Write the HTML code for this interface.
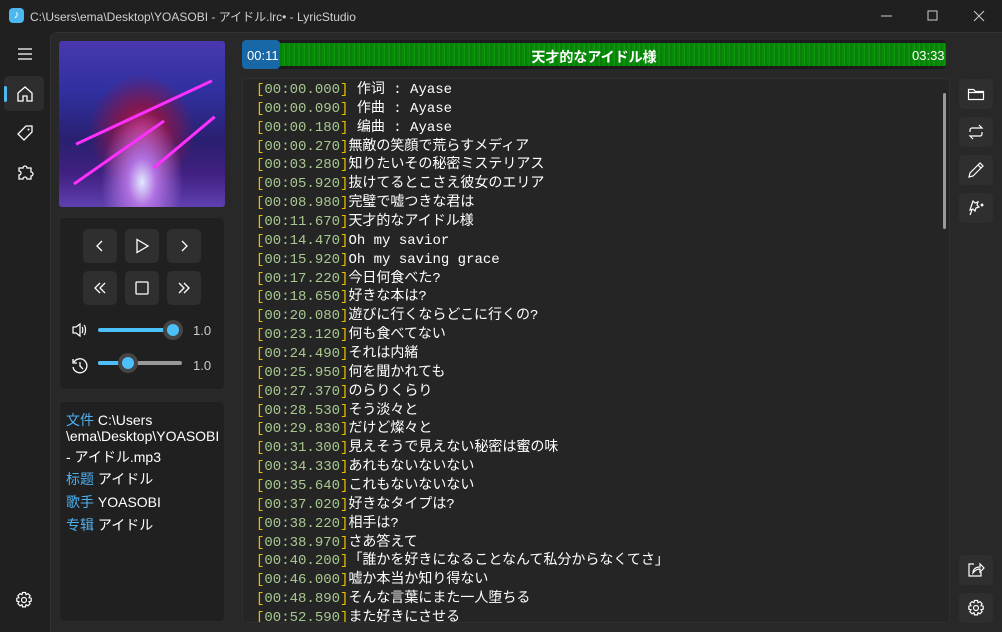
<!DOCTYPE html>
<html><head><meta charset="utf-8"><style>
*{margin:0;padding:0;box-sizing:border-box}
body{width:1002px;height:632px;background:#202020;overflow:hidden;position:relative;font-family:"Liberation Sans","Noto Sans CJK JP",sans-serif;color:#fff}
.abs{position:absolute}
.title{left:30px;top:8px;font-size:12px;color:#d0d0d0}
.main{left:50px;top:32px;width:952px;height:600px;background:#282828;border-top-left-radius:8px;border-top:1px solid #333;border-left:1px solid #333}
.panel{background:#202020;border-radius:5px;border:1px solid #2a2a2a}
.btn{background:#2f2f2f;border-radius:5px;display:flex;align-items:center;justify-content:center}
.lyr{font-family:"Liberation Mono","Noto Sans CJK JP",monospace;font-size:14px;line-height:18.86px;white-space:pre;color:#fff}
.b{color:#e8c000}.t{color:#a8c890}
.info{font-size:14px;color:#fff}
.info div{position:absolute;left:0;white-space:nowrap}
.info .k{color:#4cb0f0}
svg{display:block}
</style></head><body>
<div class="abs" style="left:9px;top:8px;width:15px;height:15px;background:#4cb8f0;border-radius:4px;color:#fff;font-size:11px;text-align:center;line-height:15px">♪</div>
<div class="abs title">C:\Users\ema\Desktop\YOASOBI - アイドル.lrc• - LyricStudio</div>
<svg class="abs" style="left:878px;top:8px" width="110" height="16"><line x1="3" y1="8" x2="14" y2="8" stroke="#ccc"/><rect x="50" y="3" width="9" height="9" fill="none" stroke="#ccc"/><path d="M96 3l10 10M106 3l-10 10" stroke="#ccc"/></svg>
<div class="abs main"></div>
<svg class="abs" style="left:17px;top:47px" width="16" height="14"><path d="M1 2h14M1 7h14M1 12h14" stroke="#fff" stroke-width="1.2"/></svg>
<div class="abs" style="left:4px;top:76px;width:40px;height:35px;background:#2d2d2d;border-radius:5px"></div>
<div class="abs" style="left:4px;top:86px;width:3px;height:16px;background:#4cb8f0;border-radius:2px"></div>
<svg class="abs" style="left:16px;top:85px" width="18" height="18"><path d="M2 8L9 2l7 6v8h-5v-5H7v5H2z" fill="none" stroke="#fff" stroke-width="1.3"/></svg>
<svg class="abs" style="left:16px;top:124px" width="18" height="18"><path d="M10 2h6v6l-8 8-6-6z" fill="none" stroke="#fff" stroke-width="1.3"/><circle cx="12.5" cy="5.5" r="1" fill="#fff"/></svg>
<svg class="abs" style="left:16px;top:163px" width="18" height="18"><path d="M3 5h4a2 2 0 1 1 4 0h4v4a2 2 0 1 1 0 4v3h-4a2 2 0 1 0-4 0H3v-4a2 2 0 1 0 0-4z" fill="none" stroke="#fff" stroke-width="1.3"/></svg>
<svg class="abs" style="left:15px;top:591px" width="18" height="18"><circle cx="9" cy="9" r="2.5" fill="none" stroke="#fff" stroke-width="1.2"/><path d="M7.5 1.5h3l.5 2.2 2-1.1 2.1 2.1-1.1 2 2.2.5v3l-2.2.5 1.1 2-2.1 2.1-2-1.1-.5 2.2h-3l-.5-2.2-2 1.1-2.1-2.1 1.1-2-2.2-.5v-3l2.2-.5-1.1-2 2.1-2.1 2 1.1z" fill="none" stroke="#fff" stroke-width="1.2"/></svg>
<div class="abs" style="left:59px;top:41px;width:166px;height:166px;border-radius:3px;overflow:hidden;background:radial-gradient(ellipse at 50% 85%,#e0e8ff 0%,#b070e0 12%,transparent 35%),radial-gradient(ellipse at 50% 55%,#c02060 0%,#801850 20%,transparent 45%),linear-gradient(180deg,#4838b0 0%,#3030a0 30%,#2a2070 60%,#402080 80%,#6040b0 100%)">
<div class="abs" style="left:10px;top:70px;width:150px;height:3px;background:#ff30ff;transform:rotate(-25deg)"></div>
<div class="abs" style="left:5px;top:110px;width:110px;height:3px;background:#ff30ff;transform:rotate(-35deg)"></div>
<div class="abs" style="left:85px;top:100px;width:80px;height:3px;background:#ff30ff;transform:rotate(-40deg)"></div>
</div>
<div class="abs panel" style="left:59px;top:217px;width:166px;height:173px"></div>
<div class="abs btn" style="left:83px;top:229px;width:34px;height:34px"><svg width="12" height="14"><path d="M8 2L3 7l5 5" fill="none" stroke="#fff" stroke-width="1.3"/></svg></div>
<div class="abs btn" style="left:125px;top:229px;width:34px;height:34px"><svg width="16" height="16"><path d="M3 1.5v13l11-6.5z" fill="none" stroke="#fff" stroke-width="1.3"/></svg></div>
<div class="abs btn" style="left:167px;top:229px;width:34px;height:34px"><svg width="12" height="14"><path d="M4 2l5 5-5 5" fill="none" stroke="#fff" stroke-width="1.3"/></svg></div>
<div class="abs btn" style="left:83px;top:271px;width:34px;height:34px"><svg width="16" height="14"><path d="M8 2L3 7l5 5M13 2L8 7l5 5" fill="none" stroke="#fff" stroke-width="1.3"/></svg></div>
<div class="abs btn" style="left:125px;top:271px;width:34px;height:34px"><svg width="16" height="16"><rect x="2" y="2" width="12" height="12" rx="1" fill="none" stroke="#fff" stroke-width="1.3"/></svg></div>
<div class="abs btn" style="left:167px;top:271px;width:34px;height:34px"><svg width="16" height="14"><path d="M3 2l5 5-5 5M8 2l5 5-5 5" fill="none" stroke="#fff" stroke-width="1.3"/></svg></div>
<svg class="abs" style="left:71px;top:322px" width="18" height="16"><path d="M2 5h3l4-3v12l-4-3H2z M11 5c1 1 1 5 0 6M13 3c2 2 2 8 0 10" fill="none" stroke="#fff" stroke-width="1.2"/></svg>
<div class="abs" style="left:98px;top:328px;width:75px;height:4px;background:#4cc0f8;border-radius:2px"></div>
<div class="abs" style="left:163px;top:320px;width:20px;height:20px;background:#454545;border-radius:50%"></div>
<div class="abs" style="left:167px;top:324px;width:12px;height:12px;background:#4cc0f8;border-radius:50%"></div>
<div class="abs" style="left:193px;top:323px;font-size:13px;color:#ccc">1.0</div>
<svg class="abs" style="left:71px;top:357px" width="18" height="18"><path d="M3 5a7 7 0 1 1-1 5M2 2v4h4M9 5v4l3 3" fill="none" stroke="#fff" stroke-width="1.3"/></svg>
<div class="abs" style="left:98px;top:361px;width:84px;height:4px;background:#999;border-radius:2px"></div>
<div class="abs" style="left:98px;top:361px;width:30px;height:4px;background:#4cc0f8;border-radius:2px"></div>
<div class="abs" style="left:118px;top:353px;width:20px;height:20px;background:#454545;border-radius:50%"></div>
<div class="abs" style="left:122px;top:357px;width:12px;height:12px;background:#4cc0f8;border-radius:50%"></div>
<div class="abs" style="left:193px;top:358px;font-size:13px;color:#ccc">1.0</div>
<div class="abs panel" style="left:59px;top:401px;width:166px;height:221px"></div>
<div class="abs info" style="left:66px;top:0;width:158px">
<div style="top:410px"><span class="k">文件</span> C:\Users</div>
<div style="top:428px">\ema\Desktop\YOASOBI</div>
<div style="top:447px">- アイドル.mp3</div>
<div style="top:469px"><span class="k">标题</span> アイドル</div>
<div style="top:492px"><span class="k">歌手</span> YOASOBI</div>
<div style="top:515px"><span class="k">专辑</span> アイドル</div>
</div>
<div class="abs" style="left:242px;top:40px;width:704px;height:29px;border-radius:4px;background:#1c1c1c;overflow:hidden">
<div class="abs" style="left:0;top:3px;width:704px;height:23px;background:repeating-linear-gradient(90deg,#0a8a0a 0 2px,#0c9a0c 2px 3px,#088008 3px 5px);border-radius:2px"></div>
<div class="abs" style="left:0;top:0;width:38px;height:29px;background:#1868a8;border-radius:4px"></div>
<div class="abs" style="left:5px;top:8px;font-size:13px">00:11</div>
<div class="abs" style="left:0;width:704px;top:7px;font-size:14px;text-align:center;font-weight:bold">天才的なアイドル様</div>
<div class="abs" style="left:670px;top:8px;font-size:13px">03:33</div>
</div>
<div class="abs panel" style="left:242px;top:78px;width:708px;height:545px;background:#252525;border-color:#303030;overflow:hidden">
<div class="abs" style="left:700px;top:14px;width:3px;height:136px;background:#999;border-radius:2px"></div>
</div>
<div class="abs" style="left:242px;top:79px;width:690px;height:543px;overflow:hidden">
<div class="lyr abs" style="left:14px;top:2px"><span class="b">[</span><span class="t">00:00.000</span><span class="b">]</span> 作词 : Ayase
<span class="b">[</span><span class="t">00:00.090</span><span class="b">]</span> 作曲 : Ayase
<span class="b">[</span><span class="t">00:00.180</span><span class="b">]</span> 编曲 : Ayase
<span class="b">[</span><span class="t">00:00.270</span><span class="b">]</span>無敵の笑顔で荒らすメディア
<span class="b">[</span><span class="t">00:03.280</span><span class="b">]</span>知りたいその秘密ミステリアス
<span class="b">[</span><span class="t">00:05.920</span><span class="b">]</span>抜けてるとこさえ彼女のエリア
<span class="b">[</span><span class="t">00:08.980</span><span class="b">]</span>完璧で嘘つきな君は
<span class="b">[</span><span class="t">00:11.670</span><span class="b">]</span>天才的なアイドル様
<span class="b">[</span><span class="t">00:14.470</span><span class="b">]</span>Oh my savior
<span class="b">[</span><span class="t">00:15.920</span><span class="b">]</span>Oh my saving grace
<span class="b">[</span><span class="t">00:17.220</span><span class="b">]</span>今日何食べた?
<span class="b">[</span><span class="t">00:18.650</span><span class="b">]</span>好きな本は?
<span class="b">[</span><span class="t">00:20.080</span><span class="b">]</span>遊びに行くならどこに行くの?
<span class="b">[</span><span class="t">00:23.120</span><span class="b">]</span>何も食べてない
<span class="b">[</span><span class="t">00:24.490</span><span class="b">]</span>それは内緒
<span class="b">[</span><span class="t">00:25.950</span><span class="b">]</span>何を聞かれても
<span class="b">[</span><span class="t">00:27.370</span><span class="b">]</span>のらりくらり
<span class="b">[</span><span class="t">00:28.530</span><span class="b">]</span>そう淡々と
<span class="b">[</span><span class="t">00:29.830</span><span class="b">]</span>だけど燦々と
<span class="b">[</span><span class="t">00:31.300</span><span class="b">]</span>見えそうで見えない秘密は蜜の味
<span class="b">[</span><span class="t">00:34.330</span><span class="b">]</span>あれもないないない
<span class="b">[</span><span class="t">00:35.640</span><span class="b">]</span>これもないないない
<span class="b">[</span><span class="t">00:37.020</span><span class="b">]</span>好きなタイプは?
<span class="b">[</span><span class="t">00:38.220</span><span class="b">]</span>相手は?
<span class="b">[</span><span class="t">00:38.970</span><span class="b">]</span>さあ答えて
<span class="b">[</span><span class="t">00:40.200</span><span class="b">]</span>「誰かを好きになることなんて私分からなくてさ」
<span class="b">[</span><span class="t">00:46.000</span><span class="b">]</span>嘘か本当か知り得ない
<span class="b">[</span><span class="t">00:48.890</span><span class="b">]</span>そんな言葉にまた一人堕ちる
<span class="b">[</span><span class="t">00:52.590</span><span class="b">]</span>また好きにさせる</div>
</div>
<div class="abs btn" style="left:959px;top:79px;width:34px;height:30px"><svg width="18" height="16"><path d="M1.5 3.5v10h15v-8h-8l-2-2z M1.5 6.5h15" fill="none" stroke="#fff" stroke-width="1.2"/></svg></div>
<div class="abs btn" style="left:959px;top:117px;width:34px;height:30px"><svg width="18" height="16"><path d="M3 8V6a2 2 0 0 1 2-2h10l-3-3M15 8v2a2 2 0 0 1-2 2H3l3 3" fill="none" stroke="#fff" stroke-width="1.2"/></svg></div>
<div class="abs btn" style="left:959px;top:155px;width:34px;height:30px"><svg width="18" height="18"><path d="M2 16l1-4L13 2l3 3L6 15z M11 4l3 3" fill="none" stroke="#fff" stroke-width="1.2"/></svg></div>
<div class="abs btn" style="left:959px;top:193px;width:34px;height:30px"><svg width="18" height="18"><path d="M6 2l2 2 3-1-1 3 2 2-3 1-1 3-2-2-3 1 1-3z M5 11l-2 5M14 6l1-1 1 1-1 1z" fill="none" stroke="#fff" stroke-width="1.2"/></svg></div>
<div class="abs btn" style="left:959px;top:555px;width:34px;height:30px"><svg width="18" height="16"><path d="M7 2H2v12h12v-4 M6 11c0-4 3-6 7-6V2l4 4-4 4V7c-3 0-5 1-7 4z" fill="none" stroke="#fff" stroke-width="1.2"/></svg></div>
<div class="abs btn" style="left:959px;top:593px;width:34px;height:30px"><svg width="18" height="18"><circle cx="9" cy="9" r="2.5" fill="none" stroke="#fff" stroke-width="1.2"/><path d="M7.5 1.5h3l.5 2.2 2-1.1 2.1 2.1-1.1 2 2.2.5v3l-2.2.5 1.1 2-2.1 2.1-2-1.1-.5 2.2h-3l-.5-2.2-2 1.1-2.1-2.1 1.1-2-2.2-.5v-3l2.2-.5-1.1-2 2.1-2.1 2 1.1z" fill="none" stroke="#fff" stroke-width="1.2"/></svg></div>
</body></html>
